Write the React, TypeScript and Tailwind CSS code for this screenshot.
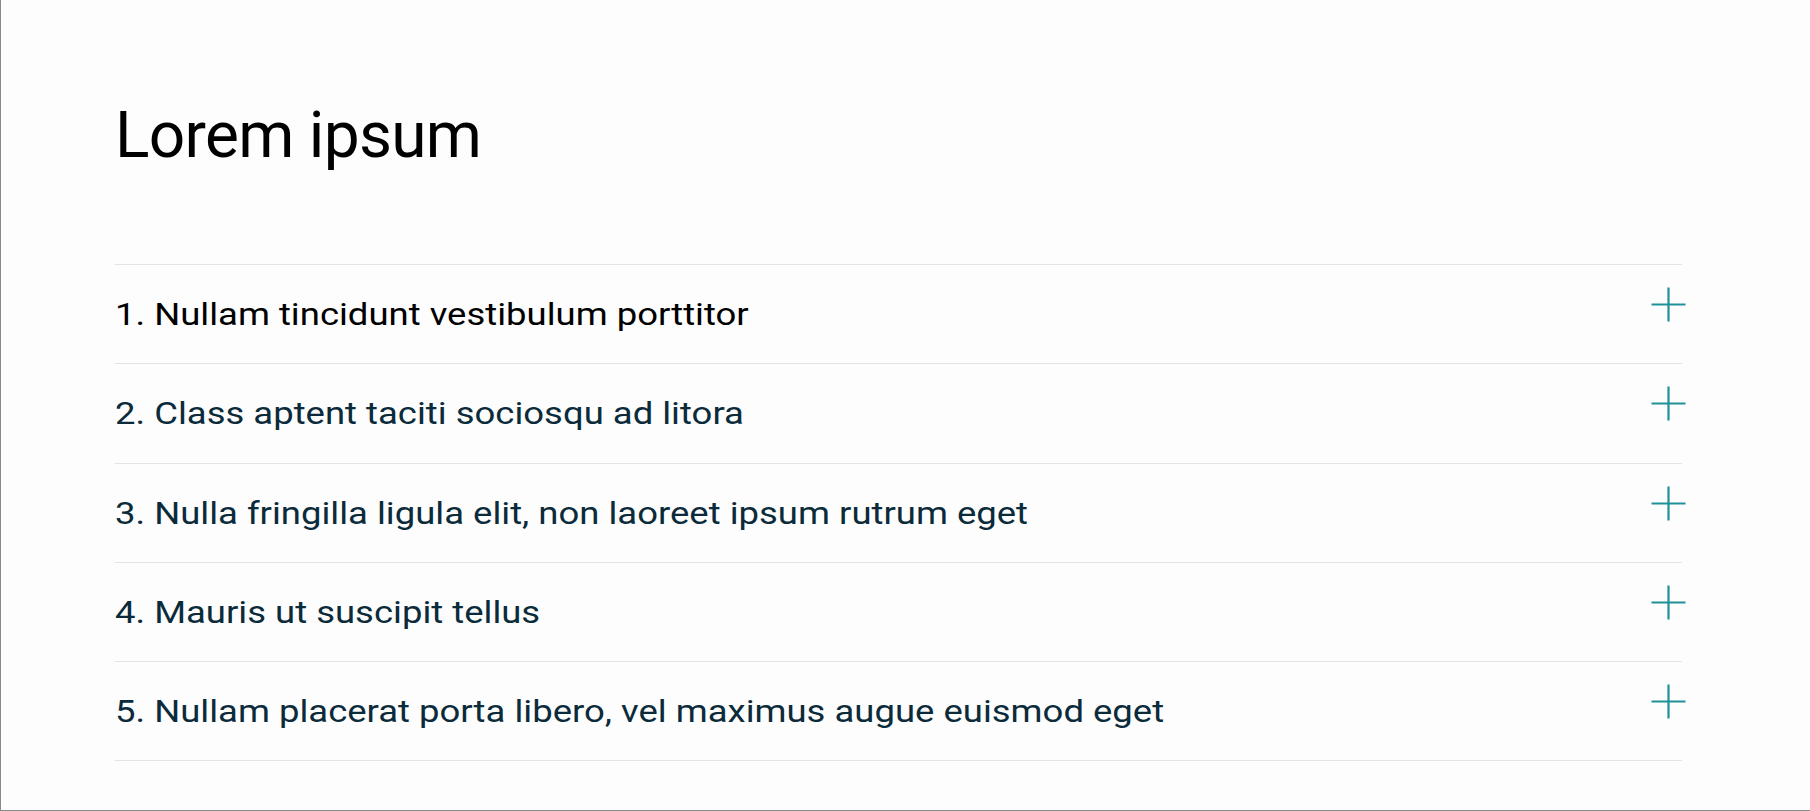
import React from "react";

const items = [
  "1. Nullam tincidunt vestibulum porttitor",
  "2. Class aptent taciti sociosqu ad litora",
  "3. Nulla fringilla ligula elit, non laoreet ipsum rutrum eget",
  "4. Mauris ut suscipit tellus",
  "5. Nullam placerat porta libero, vel maximus augue euismod eget",
];

function Plus() {
  return (
    <svg width="35" height="35" viewBox="0 0 35 35" className="shrink-0 mt-[22px] mr-[-4px] self-start">
      <path d="M17.5 0.5 V34.5 M0.5 17.5 H34.5" stroke="#1f9199" strokeWidth="2.2" fill="none" />
    </svg>
  );
}

export default function App() {
  return (
    <div
      className="h-[811px] w-full border-l border-b border-[#8a8a8a] bg-[#fdfdfd] pl-[114px] pr-[128px] pt-[98px]"
      style={{ fontFamily: "Roboto, 'Liberation Sans', sans-serif" }}
    >
      <h1 className="text-[64px] leading-[75px] font-normal tracking-[-0.7px] text-black">Lorem ipsum</h1>
      <div className="mt-[91px] border-b border-[#e4e4e4]">
        {items.map((t, i) => (
          <div key={i} className="flex h-[99.3px] items-center justify-between border-t border-[#e4e4e4]">
            <span
              className={`inline-block origin-left scale-x-[1.14] text-[32px] leading-[38px] ${
                i === 0 ? "text-black" : "text-[#0b2b3b]"
              }`}
            >
              {t}
            </span>
            <Plus />
          </div>
        ))}
      </div>
    </div>
  );
}
